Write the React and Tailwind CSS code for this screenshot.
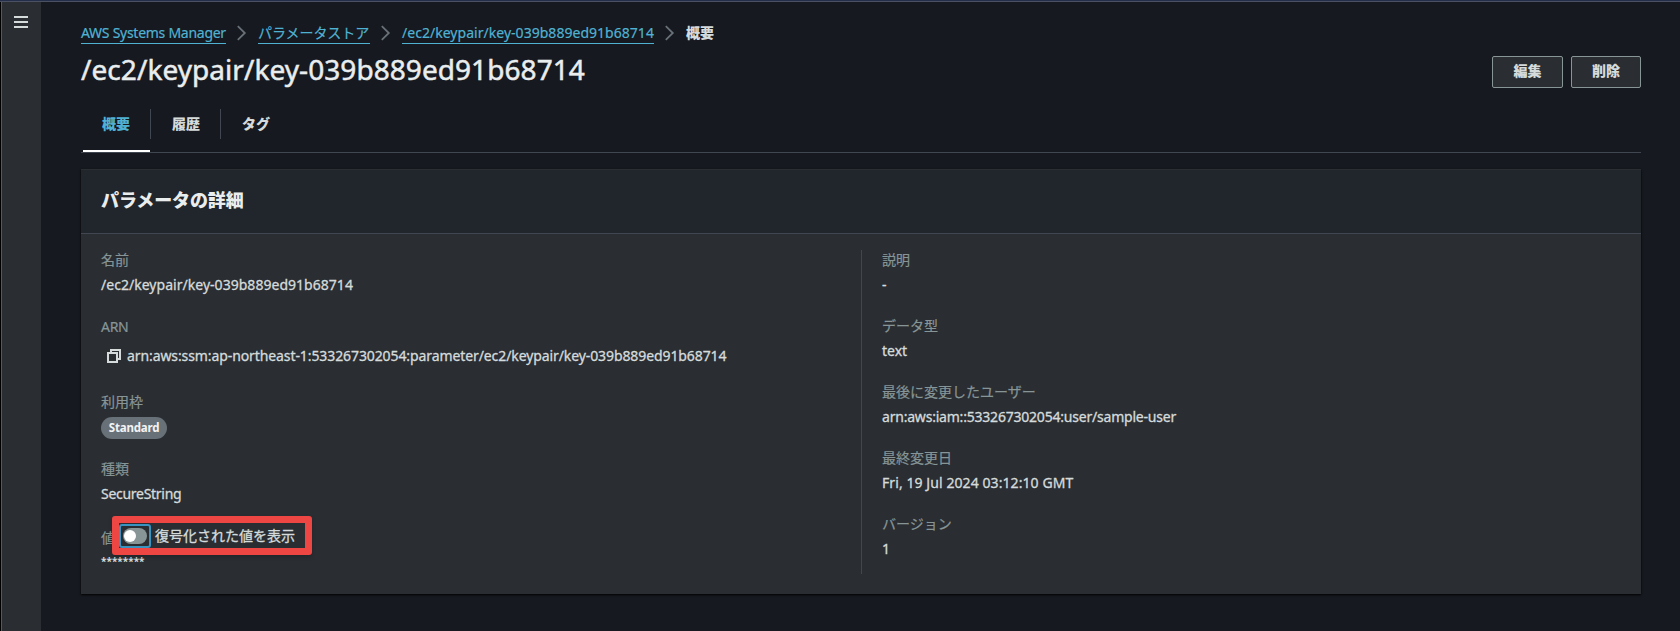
const crumbs = [
  { text: 'AWS Systems Manager', cls: 'w-[145px] tracking-[-0.27px]' },
  { text: 'パラメータストア', cls: 'w-[112px] tracking-[-0.05px]' },
  { text: '/ec2/keypair/key-039b889ed91b68714', cls: 'w-[252px] tracking-[0.03px]' },
];

const details = [
  ['説明', '-', ''],
  ['データ型', 'text', ''],
  ['最後に変更したユーザー', 'arn:aws:iam::533267302054:user/sample-user', 'tracking-[-0.21px]'],
  ['最終変更日', 'Fri, 19 Jul 2024 03:12:10 GMT', 'tracking-[0.08px]'],
  ['バージョン', '1', ''],
];

function Chevron() {
  return (
    <svg className="mx-[11px] h-4 w-[10px] shrink-0" viewBox="0 0 10 16" fill="none" stroke="#687078" strokeWidth="1.8">
      <path d="M.8 1.2 7.8 8 .8 14.8" />
    </svg>
  );
}

function Label({ children }) {
  return <div className="h-[22px] leading-[20px] text-[#879596] [-webkit-text-stroke:0.2px_#879596]">{children}</div>;
}

function Field({ label, valueClass = '', children }) {
  return (
    <div className="mb-[18px]">
      <Label>{label}</Label>
      <div className={`h-[26px] leading-[26px] [-webkit-text-stroke:0.3px_#d5dbdb] ${valueClass}`}>{children}</div>
    </div>
  );
}

export default function App() {
  return (
    <div className="flex h-[631px] w-[1680px] flex-col overflow-hidden whitespace-nowrap bg-[#16191f] font-['Noto_Sans','Noto_Sans_CJK_JP',sans-serif] text-[14px] text-[#d5dbdb]">
      <div className="h-[2px] shrink-0 border-b border-[#4b5163] bg-[#232f4a]" />
      <div className="flex flex-1 border-l border-black">
        <aside className="w-[40px] shrink-0 border-l border-[#55585e] bg-[#2a2e33] pl-[12px] pt-[14px]">
          <svg className="h-3 w-[14px]" viewBox="0 0 14 12" fill="#d5dbdb">
            <path d="M0 0h14v2H0zM0 5h14v2H0zM0 10h14v2H0z" />
          </svg>
        </aside>
        <main className="flex w-[1600px] flex-col pl-10">
          <nav className="mt-[20px] flex h-[22px] items-center">
            {crumbs.map((c) => (
              <div key={c.text} className="flex items-center">
                <a className={`h-[21px] border-b border-[#50b2d2] leading-[20px] text-[#50b2d2] [-webkit-text-stroke:0.2px_#50b2d2] ${c.cls}`}>{c.text}</a>
                <Chevron />
              </div>
            ))}
            <span className="font-black leading-[20px]">概要</span>
          </nav>
          <div className="flex h-[52px] justify-between">
            <h1 className="h-[52px] text-[28px] leading-[50px] tracking-[0.06px] text-[#eaeded] [-webkit-text-stroke:0.5px_#eaeded]">/ec2/keypair/key-039b889ed91b68714</h1>
            <div className="mt-[12px] flex gap-2 font-black leading-[28px]">
              <button className="h-8 w-[71px] rounded-[2px] border border-[#879596] bg-[#2a2e33] pb-[2px]">編集</button>
              <button className="h-8 w-[70px] rounded-[2px] border border-[#879596] bg-[#2a2e33] pb-[2px]">削除</button>
            </div>
          </div>
          <div className="mt-[12px] flex h-[45px] w-[1560px] border-b border-[#414750] pl-[2px] font-black">
            <div className="flex h-[44px] w-[67px] flex-col border-b-2 border-white text-[#50b2d2]">
              <div className="mt-px flex h-[30px] items-center pb-[2px] pl-[19px]">概要</div>
            </div>
            <div className="mt-px flex h-[30px] w-[71px] items-center border-x border-[#414750] pb-[2px] pl-[21px]">履歴</div>
            <div className="mt-px flex h-[30px] items-center pb-[2px] pl-[21px]">タグ</div>
          </div>
          <section className="mt-4 flex h-[425px] w-[1560px] flex-col bg-[#2a2e33] shadow-[0_1px_2px_#000]">
            <header className="h-[65px] border-b border-t border-b-[#414750] border-t-[#2b2f33] bg-[#21252c] pl-5">
              <h2 className="text-[18px] font-black leading-[61px] tracking-[-0.1px] text-[#eaeded]">パラメータの詳細</h2>
            </header>
            <div className="flex h-[340px] pt-4">
              <div className="w-[780px] pl-5">
                <Field label="名前" valueClass="tracking-[0.03px]">/ec2/keypair/key-039b889ed91b68714</Field>
                <div className="mb-[18px]">
                  <div className="h-[22px] leading-[22px] tracking-[-0.3px] text-[#879596] [-webkit-text-stroke:0.2px_#879596]">ARN</div>
                  <div className="flex h-9 items-center pl-[6px]">
                    <svg className="mr-[6px] h-[14px] w-[14px]" viewBox="0 0 14 14" fill="none" stroke="#d5dbdb" strokeWidth="2">
                      <path d="M1 4h9v9H1zM4 4V1h9v9h-3" />
                    </svg>
                    <span className="pb-[2px] tracking-[-0.095px] [-webkit-text-stroke:0.3px_#d5dbdb]">arn:aws:ssm:ap-northeast-1:533267302054:parameter/ec2/keypair/key-039b889ed91b68714</span>
                  </div>
                </div>
                <div className="mb-[18px]">
                  <Label>利用枠</Label>
                  <div className="h-[27px] pt-[3px]">
                    <span className="flex h-[22px] w-[66px] items-center justify-center rounded-full bg-[#687078] text-[11.5px] font-bold tracking-[-0.2px] text-[#f2f3f3]">Standard</span>
                  </div>
                </div>
                <Field label="種類" valueClass="tracking-[-0.28px]">SecureString</Field>
                <div className="relative">
                  <div className="h-[26px] leading-[26px] text-[#879596] [-webkit-text-stroke:0.2px_#879596]">値</div>
                  <div className="h-[22px] text-[10px] font-bold leading-[21px] tracking-[0.02px]">********</div>
                  <div className="absolute left-[11px] top-[-9px] flex h-[39px] w-[200px] items-center rounded-[3px] border-[7px] border-[#ee4743] bg-[#2a2e33] shadow-[0_2px_4px_rgba(0,0,0,0.2)]">
                    <span className="flex h-6 w-8 items-center justify-center rounded-[3px] border-2 border-[#3893c0]">
                      <span className="flex h-4 w-6 items-center rounded-full bg-[#879596] pl-px">
                        <span className="h-3 w-3 rounded-full bg-white" />
                      </span>
                    </span>
                    <span className="ml-1 pb-px [-webkit-text-stroke:0.3px_#d5dbdb]">復号化された値を表示</span>
                  </div>
                </div>
              </div>
              <div className="h-[324px] border-l border-[#414750] pl-5">
                {details.map(([label, value, valueClass]) => (
                  <Field key={label} label={label} valueClass={valueClass}>{value}</Field>
                ))}
              </div>
            </div>
          </section>
        </main>
      </div>
    </div>
  );
}
